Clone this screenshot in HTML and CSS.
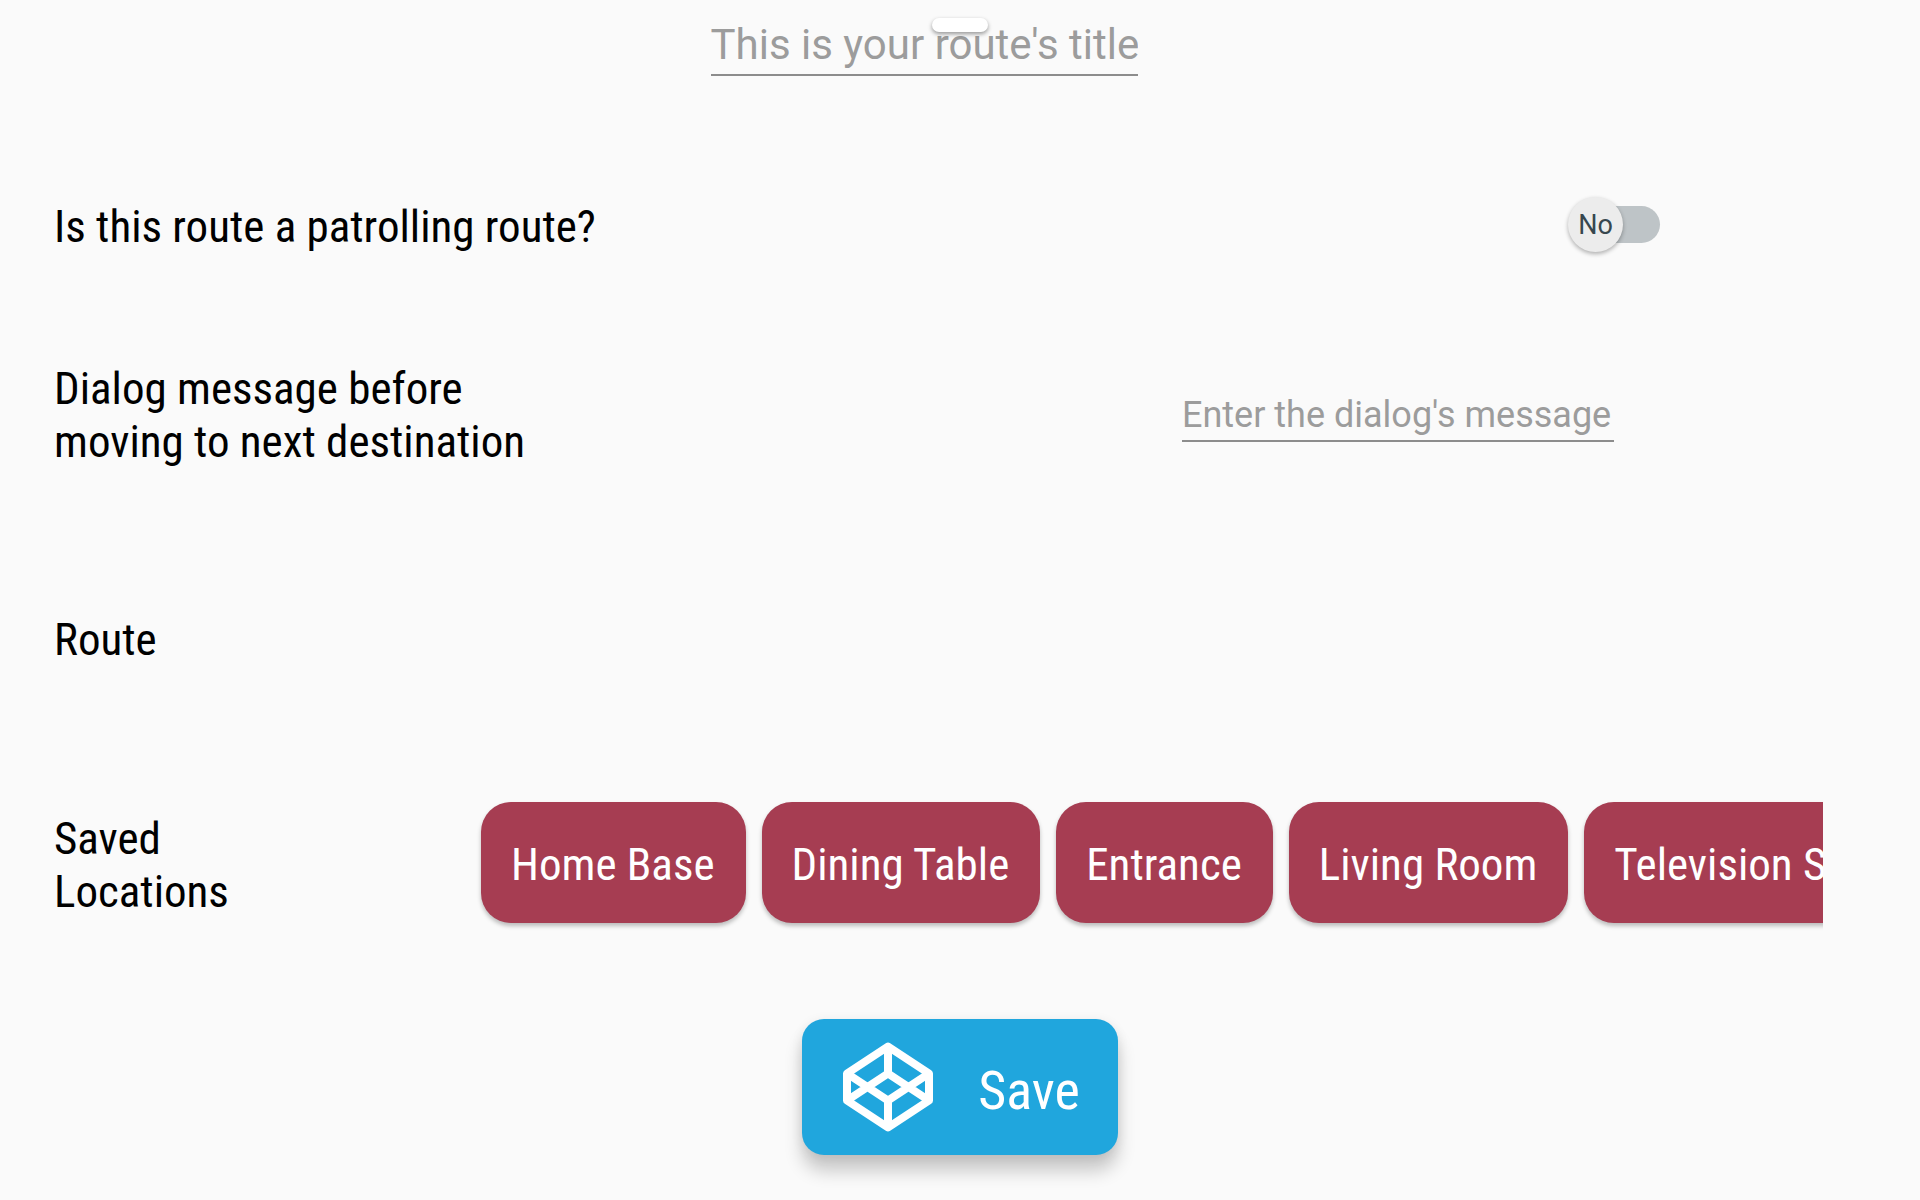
FILE: index.html
```html
<!DOCTYPE html>
<html lang="en">
<head>
<meta charset="utf-8">
<meta name="viewport" content="width=device-width, initial-scale=1">
<title>New route</title>
<link rel="stylesheet" href="styles.css">
</head>
<body>
<form class="route-form">
  <div class="handle" aria-hidden="true"></div>
  <header class="title-row">
    <input class="field field-title" type="text" aria-label="Route title" placeholder="This is your route's title">
  </header>

  <div class="row row-patrol">
    <label class="label" for="patrol">Is this route a patrolling route?</label>
    <span class="switch">
      <input class="switch-input" type="checkbox" role="switch" id="patrol">
      <span class="switch-thumb" aria-hidden="true">No</span>
    </span>
  </div>

  <div class="row row-dialog">
    <label class="label" for="message">Dialog message before<br>moving to next destination</label>
    <input class="field field-message" type="text" id="message" placeholder="Enter the dialog's message">
  </div>

  <div class="row row-route">
    <h2 class="label">Route</h2>
  </div>

  <div class="row row-saved">
    <h2 class="label label-saved">Saved Locations</h2>
    <div class="chips">
      <button class="chip" type="button">Home Base</button>
      <button class="chip" type="button">Dining Table</button>
      <button class="chip" type="button">Entrance</button>
      <button class="chip" type="button">Living Room</button>
      <button class="chip" type="button">Television Set</button>
    </div>
  </div>

  <footer class="actions">
    <button class="save" type="submit">
      <svg class="save-icon" viewBox="0 0 90 90" fill="none" stroke="#fff" stroke-width="8" stroke-linejoin="round" aria-hidden="true">
        <path d="M45 4.500 86 31.500V58.500L45 85.500 4 58.500V31.500Z"/>
        <path d="M45 5V31.500M45 58.500V85M4 31.500 45 58.500 86 31.500M4 58.500 45 31.500 86 58.500"/>
      </svg>
      <span class="save-text">Save</span>
    </button>
  </footer>
</form>
</body>
</html>
```
FILE: styles.css
```css
* {
  box-sizing: border-box;
}

body {
  margin: 0;
  background: #fafafa;
  color: #000;
  font-family: Roboto, "Liberation Sans", sans-serif;
}

.route-form {
  position: relative;
  min-height: 100vh;
  overflow: hidden;
}

/* Drag handle that floats over the title */
.handle {
  position: absolute;
  top: 18px;
  left: 50%;
  width: 56px;
  height: 14px;
  margin-left: -28px;
  border-radius: 7px;
  background: #fff;
  box-shadow: 0 2px 4px rgba(0, 0, 0, 0.4);
}

.title-row {
  display: flex;
  justify-content: center;
  padding: 16px 72px 0 0;
}

.field {
  padding: 0;
  border: 0;
  border-bottom: 2px solid #8c8c8c;
  border-radius: 0;
  outline: 0;
  background: transparent;
  color: #000;
  font-family: inherit;
}

.field::placeholder {
  color: #9c9c9c;
  opacity: 1;
}

.field-title {
  width: 427px;
  height: 60px;
  padding-bottom: 2px;
  font-size: 42px;
}

.field-message {
  width: 432px;
  height: 54px;
  padding-top: 2px;
  font-size: 36px;
}

.row {
  display: flex;
  align-items: center;
  justify-content: space-between;
  padding-left: 54px;
}

.row-patrol {
  margin-top: 124px;
  padding-right: 260px;
}

.row-dialog {
  margin-top: 109px;
  padding-right: 306px;
}

.row-route {
  margin-top: 145px;
}

.row-saved {
  margin-top: 120px;
  padding-right: 97px;
}

.label {
  margin: 0;
  font-family: "Roboto Condensed", "Liberation Sans Narrow", sans-serif;
  font-size: 45px;
  font-weight: 400;
  line-height: 53px;
}

.label-saved {
  flex: 0 0 200px;
  padding-top: 4px;
}

.switch {
  position: relative;
  display: flex;
  align-items: center;
  width: 92px;
  height: 49px;
}

.switch-input {
  appearance: none;
  width: 80px;
  height: 37px;
  margin: 0 0 4px auto;
  border-radius: 19px;
  background: #bec4c7;
}

.switch-thumb {
  position: absolute;
  top: -5px;
  left: 0;
  width: 55px;
  height: 55px;
  border-radius: 50%;
  background: #ececec;
  box-shadow: 0 2px 4px rgba(0, 0, 0, 0.3);
  color: #37474f;
  font-size: 27px;
  line-height: 57px;
  text-align: center;
  pointer-events: none;
}

.chips {
  display: flex;
  flex: 1;
  gap: 16px;
  min-width: 0;
  margin-left: 211px;
  padding: 16px;
  padding-right: 0;
  overflow-x: auto;
  scrollbar-width: none;
}

.chip {
  flex: none;
  padding: 36px 31px 32px 30px;
  border: 0;
  border-radius: 30px;
  background: #a63d52;
  box-shadow: 0 3px 4px rgba(0, 0, 0, 0.25);
  color: #fff;
  font-family: "Roboto Condensed", "Liberation Sans Narrow", sans-serif;
  font-size: 45px;
  line-height: 53px;
  white-space: nowrap;
}

.actions {
  display: flex;
  justify-content: center;
  margin-top: 80px;
  padding-bottom: 45px;
}

.save {
  display: flex;
  align-items: center;
  gap: 45px;
  height: 136px;
  padding: 0 38px 0 41px;
  border: 0;
  border-radius: 22px;
  background: #20a6dd;
  box-shadow: 0 16px 18px rgba(0, 0, 0, 0.2), 0 2px 12px rgba(0, 0, 0, 0.08);
  color: #fff;
  font-family: "Roboto Condensed", "Liberation Sans Narrow", sans-serif;
  font-size: 54px;
  line-height: 63px;
}

.save-icon {
  width: 90px;
  height: 90px;
}

.save-text {
  padding-top: 6px;
}
```
